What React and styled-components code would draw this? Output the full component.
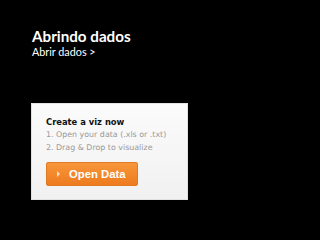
import React from "react";
import styled, { createGlobalStyle } from "styled-components";

const Global = createGlobalStyle`
  html, body { margin: 0; padding: 0; background: #000; }
  body { width: 320px; height: 240px; overflow: hidden; }
`;

const Slide = styled.div`
  width: 320px;
  height: 240px;
  background: #000;
  box-sizing: border-box;
  padding: 28px 0 0 32px;
  display: flex;
  flex-direction: column;
`;

const Title = styled.h1`
  margin: 0;
  font-family: Lato, "Open Sans", sans-serif;
  font-weight: 700;
  font-size: 15.2px;
  line-height: 17px;
  color: #fff;
`;

const Subtitle = styled.div`
  font-family: Lato, "Open Sans", sans-serif;
  font-size: 10.8px;
  line-height: 13px;
  color: #fff;
`;

const Panel = styled.div`
  margin: 45px 0 0 -1px;
  width: 157px;
  height: 97px;
  box-sizing: border-box;
  background: linear-gradient(#fbfbfb, #f1f1f1);
  border: 1px solid #e2e2e2;
  padding: 12px 0 0 14px;
  display: flex;
  flex-direction: column;
`;

const PanelTitle = styled.div`
  font-family: "DejaVu Sans", Verdana, sans-serif;
  font-weight: 700;
  font-size: 8.4px;
  line-height: 12px;
  color: #111;
`;

const Step = styled.div`
  font-family: "DejaVu Sans", Verdana, sans-serif;
  font-size: 7.9px;
  line-height: 13px;
  color: #999;
`;

const Button = styled.div`
  margin-top: 8px;
  width: 92px;
  height: 24px;
  box-sizing: border-box;
  border-radius: 2px;
  background: linear-gradient(#f7963a, #ee7b1f);
  border: 1px solid #e07a24;
  display: flex;
  align-items: center;
  padding-left: 10px;
  gap: 9px;
  font-family: "Liberation Sans", Arial, sans-serif;
  font-weight: 700;
  font-size: 11.3px;
  color: #fff;
`;

const Arrow = styled.span`
  width: 0;
  height: 0;
  border-top: 3px solid transparent;
  border-bottom: 3px solid transparent;
  border-left: 3px solid #fde0c6;
`;

export default function App() {
  return (
    <>
      <Global />
      <Slide>
        <Title>Abrindo dados</Title>
        <Subtitle>Abrir dados &gt;</Subtitle>
        <Panel>
          <PanelTitle>Create a viz now</PanelTitle>
          <Step>1. Open your data (.xls or .txt)</Step>
          <Step>2. Drag &amp; Drop to visualize</Step>
          <Button>
            <Arrow />
            Open Data
          </Button>
        </Panel>
      </Slide>
    </>
  );
}
